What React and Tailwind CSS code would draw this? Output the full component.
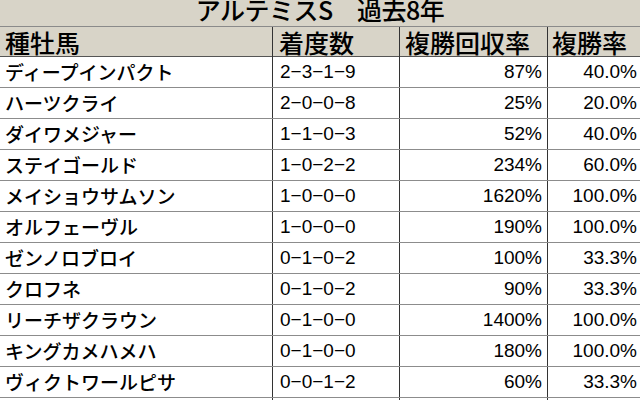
const ROWS = [
  ['ディープインパクト', '2−3−1−9', '87%', '40.0%'],
  ['ハーツクライ', '2−0−0−8', '25%', '20.0%'],
  ['ダイワメジャー', '1−1−0−3', '52%', '40.0%'],
  ['ステイゴールド', '1−0−2−2', '234%', '60.0%'],
  ['メイショウサムソン', '1−0−0−0', '1620%', '100.0%'],
  ['オルフェーヴル', '1−0−0−0', '190%', '100.0%'],
  ['ゼンノロブロイ', '0−1−0−2', '100%', '33.3%'],
  ['クロフネ', '0−1−0−2', '90%', '33.3%'],
  ['リーチザクラウン', '0−1−0−0', '1400%', '100.0%'],
  ['キングカメハメハ', '0−1−0−0', '180%', '100.0%'],
  ['ヴィクトワールピサ', '0−0−1−2', '60%', '33.3%'],
  ['シンボリクリスエス', '0−0−1−1', '95%', '50.0%'],
];

const jp = { fontFamily: '"Noto Sans CJK JP", sans-serif' };
const num = { fontFamily: '"Liberation Sans", "Noto Sans CJK JP", sans-serif' };

export default function App() {
  return (
    <div className="w-[640px] h-[400px] overflow-hidden bg-white text-black" style={jp}>
      <div className="h-[27px] overflow-hidden bg-[#d8d4c8] flex justify-center items-start border-b border-[#8a8a8a]">
        <span className="text-[25px] leading-[25px] font-medium -mt-[3px] tracking-[-0.5px]">アルテミスS　過去8年</span>
      </div>
      <div className="grid grid-cols-[273px_127px_148px_92px] h-[30px] bg-[#d8d4c8] border-b border-[#555]">
        <div className="px-[5px] text-[25px] leading-[31px] font-medium border-r border-[#333]">種牡馬</div>
        <div className="px-[6px] text-[25px] leading-[31px] font-medium border-r border-[#333]">着度数</div>
        <div className="px-[5px] text-[25px] leading-[31px] font-medium border-r border-[#333]">複勝回収率</div>
        <div className="px-[4px] text-[25px] leading-[31px] font-medium">複勝率</div>
      </div>
      {ROWS.map((r, i) => (
        <div key={i} className="grid grid-cols-[273px_127px_148px_92px] h-[31px] border-b border-[#8c8c8c]">
          <div className="pl-[5px] text-[19px] leading-[30px] font-medium border-r border-[#333] whitespace-nowrap">{r[0]}</div>
          <div className="pl-[7px] text-[19px] leading-[30px] border-r border-[#333]" style={num}>{r[1]}</div>
          <div className="pr-[5px] text-right text-[19px] leading-[30px] border-r border-[#333]" style={num}>{r[2]}</div>
          <div className="pr-[3px] text-right text-[19px] leading-[30px]" style={num}>{r[3]}</div>
        </div>
      ))}
    </div>
  );
}
